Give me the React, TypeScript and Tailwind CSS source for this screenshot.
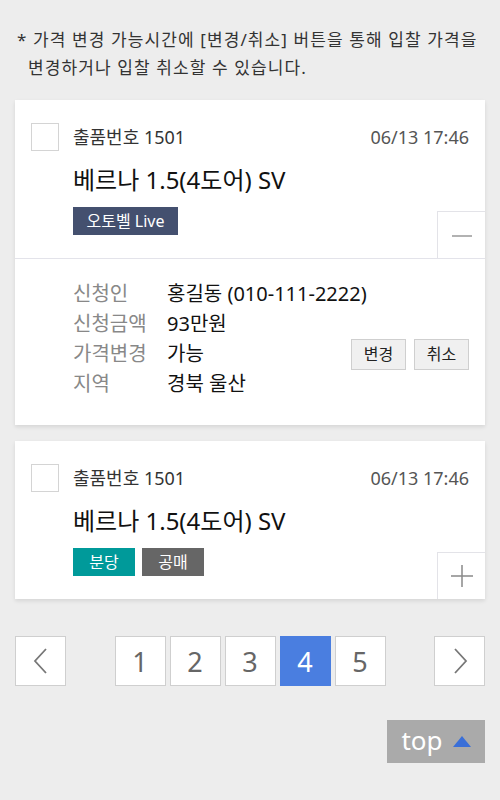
import React from "react";

const font = "font-['Noto_Sans','Noto_Sans_CJK_KR',sans-serif]";

const Badge = ({ label, color, width }: { label: string; color: string; width: string }) => (
  <span className={`flex h-[28px] items-center justify-center text-[16px] leading-none text-white ${color} ${width}`}>
    {label}
  </span>
);

const ItemHeader = ({ badges, open }: { badges: React.ReactNode; open: boolean }) => (
  <div className="relative px-[16px] pt-[23px] pb-[23px]">
    <div className="flex">
      <div className="h-[28px] w-[28px] shrink-0 border border-[#d4d4d4] bg-white" />
      <div className="ml-[14px] flex-1">
        <div className="flex h-[28px] items-center justify-between text-[18px] text-[#333]">
          <span>출품번호 1501</span>
          <span className="text-[#555]">06/13 17:46</span>
        </div>
        <div className="mt-[14px] h-[30px] text-[24px] leading-[30px] text-[#111]">베르나 1.5(4도어) SV</div>
        <div className="mt-[12px] flex gap-[7px]">{badges}</div>
      </div>
    </div>
    <button className="absolute right-0 bottom-0 flex h-[47px] w-[48px] items-center justify-center border-t border-l border-[#e3e3e8] bg-white">
      {open ? (
        <svg width="22" height="22" viewBox="0 0 22 22">
          <line x1="1" y1="12" x2="21" y2="12" stroke="#999" strokeWidth="1.5" />
        </svg>
      ) : (
        <svg width="24" height="24" viewBox="0 0 24 24">
          <line x1="1" y1="12" x2="23" y2="12" stroke="#888" strokeWidth="1.5" />
          <line x1="12" y1="1" x2="12" y2="23" stroke="#888" strokeWidth="1.5" />
        </svg>
      )}
    </button>
  </div>
);

const details = [
  ["신청인", "홍길동 (010-111-2222)"],
  ["신청금액", "93만원"],
  ["가격변경", "가능"],
  ["지역", "경북 울산"],
];

const PageBox = ({ children, active }: { children: React.ReactNode; active?: boolean }) => (
  <button
    className={`flex h-[50px] w-[51px] items-center justify-center border text-[27px] leading-none ${
      active ? "border-[#4a7ee0] bg-[#4a7ee0] text-white" : "border-[#cfcfcf] bg-white text-[#666]"
    }`}
  >
    {children}
  </button>
);

export default function App() {
  return (
    <div className={`min-h-[800px] bg-[#ededed] px-[15px] pt-[26px] pb-[37px] ${font}`}>
      <p className="pl-[13px] -indent-[11px] break-keep text-[17px] leading-[28px] tracking-[1.1px] text-[#333]">
        * 가격 변경 가능시간에 [변경/취소] 버튼을 통해 입찰 가격을 변경하거나 입찰 취소할 수 있습니다.
      </p>

      <div className="mt-[18px] bg-white shadow-[0_2px_4px_rgba(0,0,0,0.1)]">
        <ItemHeader open badges={<Badge label="오토벨 Live" color="bg-[#44506f]" width="w-[105px]" />} />
        <div className="border-t border-[#e3e3ea] pt-[20px] pr-[16px] pb-[26px] pl-[58px]">
          {details.map(([label, value], i) => (
            <div key={label} className="flex h-[30px] items-center text-[20px]">
              <span className="w-[94px] text-[#888]">{label}</span>
              <span className="flex-1 text-[#111]">{value}</span>
              {i === 2 && (
                <div className="flex gap-[8px]">
                  <button className="h-[31px] w-[55px] border border-[#cfcfcf] bg-[#f0f0f0] text-[16px] text-[#222]">변경</button>
                  <button className="h-[31px] w-[55px] border border-[#cfcfcf] bg-[#f0f0f0] text-[16px] text-[#222]">취소</button>
                </div>
              )}
            </div>
          ))}
        </div>
      </div>

      <div className="mt-[16px] bg-white shadow-[0_2px_4px_rgba(0,0,0,0.1)]">
        <ItemHeader
          open={false}
          badges={
            <>
              <Badge label="분당" color="bg-[#009a9a]" width="w-[62px]" />
              <Badge label="공매" color="bg-[#666666]" width="w-[62px]" />
            </>
          }
        />
      </div>

      <div className="mt-[37px] flex items-center justify-between">
        <PageBox>
          <svg width="20" height="28" viewBox="0 0 20 28">
            <polyline points="15,2 4,14 15,26" fill="none" stroke="#777" strokeWidth="1.8" />
          </svg>
        </PageBox>
        <div className="flex gap-[4px]">
          <PageBox>1</PageBox>
          <PageBox>2</PageBox>
          <PageBox>3</PageBox>
          <PageBox active>4</PageBox>
          <PageBox>5</PageBox>
        </div>
        <PageBox>
          <svg width="20" height="28" viewBox="0 0 20 28">
            <polyline points="5,2 16,14 5,26" fill="none" stroke="#777" strokeWidth="1.8" />
          </svg>
        </PageBox>
      </div>

      <div className="mt-[34px] flex justify-end">
        <button className="flex h-[43px] w-[98px] items-center justify-center gap-[10px] bg-[#aaaaaa] text-[26px] leading-none text-white">
          <span className="-mt-[3px]">top</span>
          <svg width="18" height="11" viewBox="0 0 18 11">
            <polygon points="9,0 18,11 0,11" fill="#3a6fd8" />
          </svg>
        </button>
      </div>
    </div>
  );
}
